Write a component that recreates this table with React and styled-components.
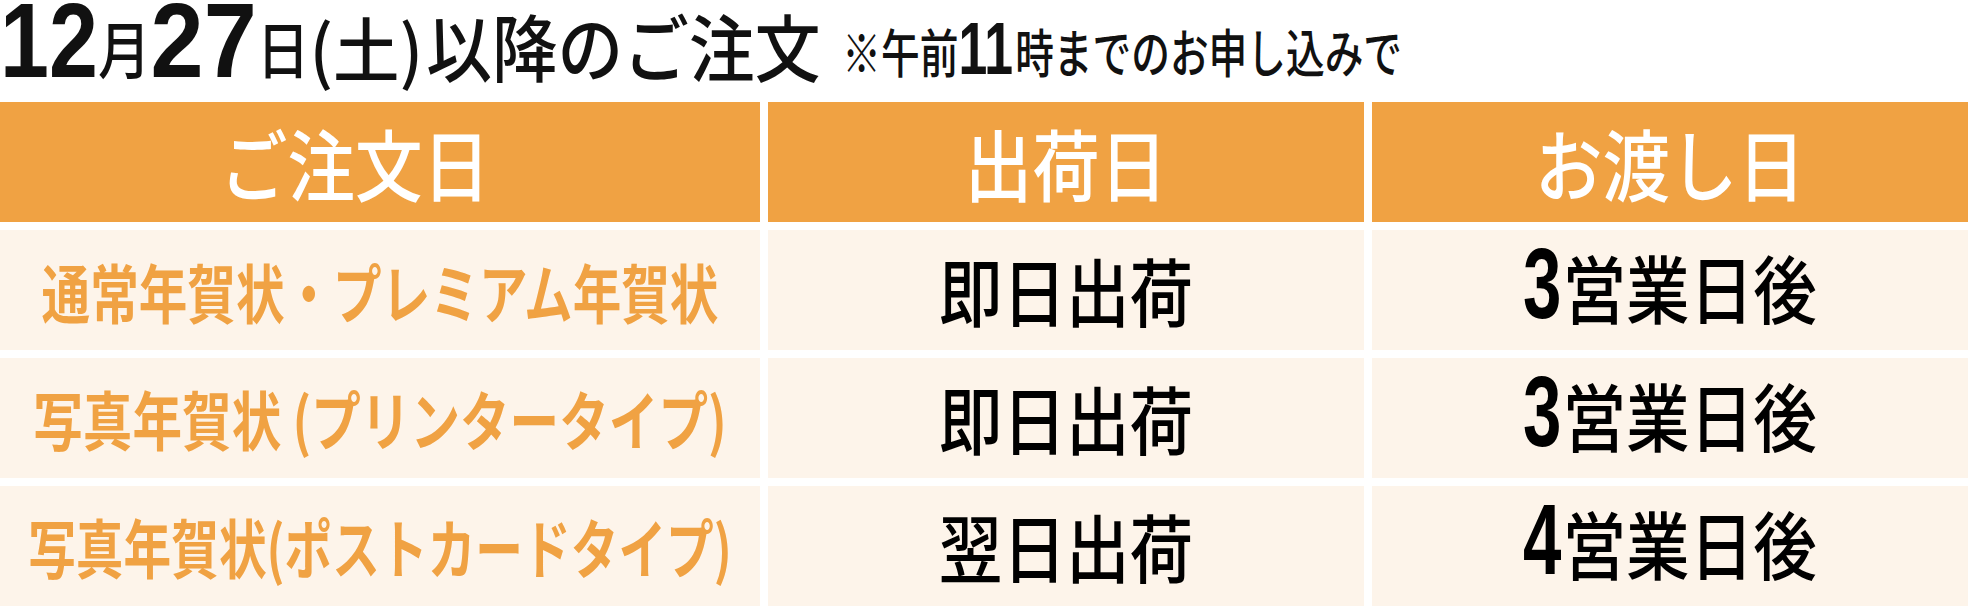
import { Fragment } from "react";
import styled, { createGlobalStyle } from "styled-components";

const GlobalStyle = createGlobalStyle`
  html, body {
    margin: 0;
    padding: 0;
    background: #ffffff;
  }
  body {
    font-family: "Noto Sans CJK JP", "Noto Sans", sans-serif;
  }
`;

const ORANGE = "#f0a243";
const CREAM = "#fdf4ea";

const Page = styled.div`
  width: 1968px;
  height: 606px;
  overflow: hidden;
`;

const Title = styled.div`
  height: 102px;
  display: flex;
  align-items: flex-end;
  color: #111;
  white-space: nowrap;
`;

// the source uses a condensed gothic: we set the size for the width we need
// and stretch the glyphs upward to the height of the original
const Tall = styled.span`
  display: inline-block;
  font-size: ${p => p.$size}px;
  transform: scaleY(${p => p.$k});
  transform-origin: ${p => p.$origin || "50% 100%"};
  margin-left: ${p => p.$ml || 0}px;
  margin-bottom: ${p => p.$mb || 0}px;
  line-height: 1;
`;

const Num = styled(Tall)`
  font-family: "Liberation Sans", Arial, sans-serif;
  font-weight: 700;
  line-height: 0.8;
`;

const Kanji = styled(Tall)`
  font-weight: 500;
`;

const Table = styled.div`
  display: grid;
  grid-template-columns: 760px 596px 596px;
  grid-auto-rows: 120px;
  gap: 8px;
`;

const Cell = styled.div`
  display: flex;
  align-items: center;
  justify-content: center;
  line-height: 1;
  white-space: nowrap;
`;

const HeadCell = styled(Cell)`
  background: ${ORANGE};
  color: #ffffff;
  font-weight: 500;
  padding-right: ${p => p.$pr || 0}px;
`;

const LabelCell = styled(Cell)`
  background: ${CREAM};
  color: ${ORANGE};
  font-weight: 700;
`;

const ValueCell = styled(Cell)`
  background: ${CREAM};
  color: #000;
  font-weight: 500;
`;

const DayNum = styled.span`
  display: inline-block;
  font-family: "Liberation Sans", Arial, sans-serif;
  font-weight: 700;
  font-size: 69px;
  transform: scaleY(1.25);
  transform-origin: 50% 84.6%;
  margin-right: 1px;
`;

const rows = [
  { label: "通常年賀状・プレミアム年賀状", size: 48.6, ship: "即日出荷", days: "3" },
  { label: "写真年賀状 (プリンタータイプ)", size: 49.6, ship: "即日出荷", days: "3" },
  { label: "写真年賀状(ポストカードタイプ)", size: 47.7, ship: "翌日出荷", days: "4" },
];

const heads = ["ご注文日", "出荷日", "お渡し日"];

export default function App() {
  return (
    <Page>
      <GlobalStyle />
      <Title>
        <Num $size={88} $k={1.2} $mb={19}>12</Num>
        <Kanji $size={52.7} $k={1.176} $mb={23}>月</Kanji>
        <Num $size={95.4} $k={1.105} $mb={19}>27</Num>
        <Kanji $size={52.7} $k={1.176} $mb={23}>日</Kanji>
        <Kanji $size={66.5} $k={1.053} $mb={21}>(土)</Kanji>
        <Kanji $size={65.7} $k={1.111} $mb={20} $ml={3}>以降のご注文</Kanji>
        <Kanji $size={38.7} $k={1.34} $mb={25} $ml={22}>※午前</Kanji>
        <Num $size={51.8} $k={1.43} $mb={24}>11</Num>
        <Kanji $size={38.7} $k={1.34} $mb={25} $ml={2}>時までのお申し込みで</Kanji>
      </Title>
      <Table>
        {heads.map((h, i) => (
          <HeadCell key={h} $pr={i === 0 ? 50 : 0}>
            <Tall $size={67.5} $k={1.156} $origin="50% 50%">{h}</Tall>
          </HeadCell>
        ))}
        {rows.map(r => (
          <Fragment key={r.label}>
            <LabelCell>
              <Tall $size={r.size} $k={64 / r.size} $origin="50% 50%">{r.label}</Tall>
            </LabelCell>
            <ValueCell>
              <Tall $size={63.6} $k={1.163} $origin="50% 50%">{r.ship}</Tall>
            </ValueCell>
            <ValueCell>
              <Tall $size={63.6} $k={1.163} $origin="50% 50%">
                <DayNum>{r.days}</DayNum>営業日後
              </Tall>
            </ValueCell>
          </Fragment>
        ))}
      </Table>
    </Page>
  );
}
